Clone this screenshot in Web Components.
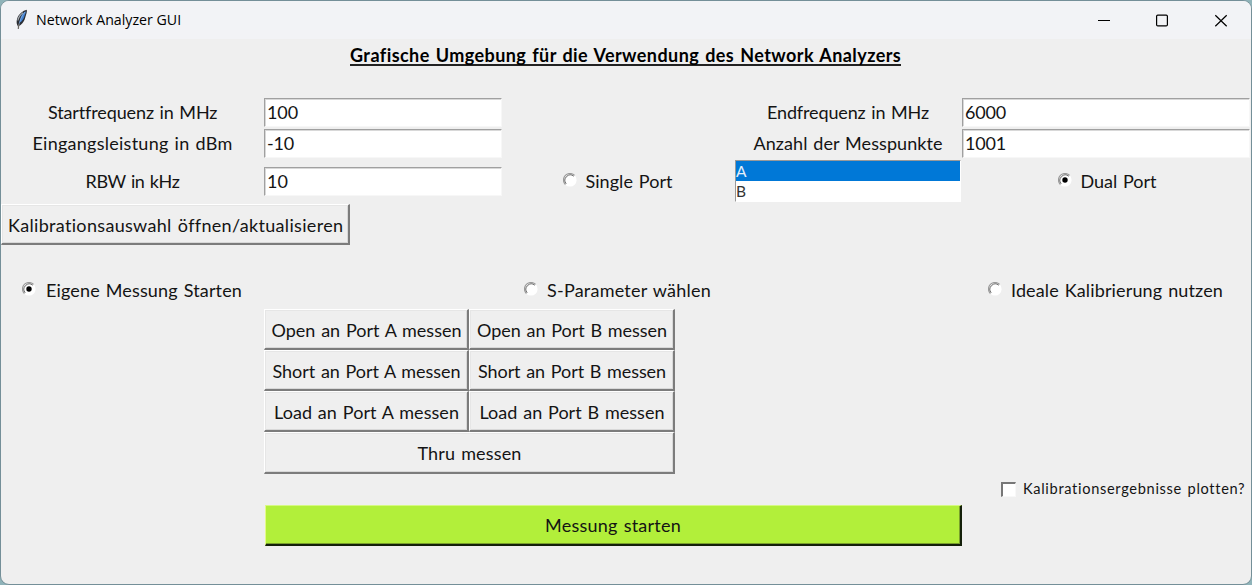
<!DOCTYPE html>
<html lang="de">
<head>
<meta charset="utf-8">
<title>Network Analyzer GUI</title>
<style>
html,body{margin:0;height:100%;overflow:hidden;background:#8fb3b9}
body{font-family:Lato,"Noto Sans",sans-serif;font-size:18px;color:#141414}
</style>
</head>
<body>
<analyzer-app></analyzer-app>
<script>
function define(name, markup, ready) {
  const template = document.createElement('template');
  template.innerHTML = markup;
  customElements.define(name, class extends HTMLElement {
    connectedCallback() {
      if (this.shadowRoot) return;
      this.attachShadow({mode: 'open'}).appendChild(template.content.cloneNode(true));
      if (ready) ready.call(this, this.shadowRoot);
    }
  });
}

/* Text set to a fixed measure by adjusting the tracking */
define('tk-text', `<style>:host{display:inline-block;white-space:nowrap;line-height:22px;flex:none;word-spacing:1.200px}span{display:inline-block}</style><span><slot></slot></span>`, function (root) {
  const target = Number(this.getAttribute('measure'));
  if (!target) return;
  const span = root.querySelector('span');
  const count = this.textContent.length;
  span.style.letterSpacing = (target - span.getBoundingClientRect().width) / count + 'px';
  this.style.width = target + 'px';
});

define('tk-feather', `<style>:host{display:block;width:13px;height:21px}svg{display:block}</style>
<svg width="13" height="21" viewBox="0 0 13 21">
<path d="M11.800 .8C8 1.500 3.800 5 2.200 9.500C1.200 12.500 1.500 15.600 3 17.500L5.600 16C8.300 13.700 9.800 11 10.400 8C11.200 5.400 12.200 3 11.800 .8Z" fill="#2b2e34"/>
<path d="M10.800 2.200C8.300 3.200 6.500 6 5.500 9L4.200 14C7.200 12.700 8.600 9.800 9.300 7.600C9.900 5.300 10.900 4.200 10.800 2.200Z" fill="#3f80d2"/>
<path d="M8 3.800C5.400 5.600 3.500 8.300 2.900 11.500" fill="none" stroke="#a3a9ae" stroke-width="1.200"/>
<path d="M10 3C6.500 7 4.700 12 3.300 18" fill="none" stroke="#9dbfe6" stroke-width=".6"/>
<path d="M3.800 15L3.300 20" stroke="#6a6763" stroke-width="1.200" fill="none"/></svg>`);

define('title-bar', `<style>
:host{display:flex;height:38px;background:#f2f3f6;align-items:center;color:#000}
tk-feather{margin:-1px 8px 0 14px}
tk-text{font:14.200px "Open Sans","Noto Sans",sans-serif;line-height:20px;word-spacing:0}
svg{margin-left:auto;margin-right:23px;display:block}
</style><tk-feather></tk-feather><tk-text measure="147.500"><slot></slot></tk-text>
<svg width="130" height="14" viewBox="0 0 130 14" fill="none" stroke="#000">
<path d="M0 7.500H12" stroke-width="1"/><rect x="58.600" y="2.100" width="10.800" height="10.800" rx="1.200" stroke-width="1.200"/><path d="M117.300 2.200L128.700 13.200M128.700 2.200L117.300 13.200" stroke-width="1.200"/></svg>`);

define('tk-entry', `<style>
:host{display:block;box-sizing:border-box;height:29px;background:#fff;border:1px solid #f7f7f7;border-top:1px solid #a0a0a0;border-left:1px solid #a0a0a0;box-shadow:inset 1px 1px #d8d8d8;padding:2px 0 0 2px}
</style><slot></slot>`);

define('tk-button', `<style>
:host{display:flex;box-sizing:border-box;align-items:center;justify-content:center;padding:2px 0 0 1px;background:#efefef;border:solid;border-width:1px 2px 2px 1px;border-color:#fff #7c7c7c #7c7c7c #fff;box-shadow:inset 1px 1px #e6e6e6,inset -1px -1px #d8d8d8}
:host([primary]){background:#b2ef3a;border-color:#d6f982 #14200a #14200a #e4fb8a;box-shadow:inset -1px -1px #789f2a;padding:0}
</style><slot></slot>`);

define('tk-radio', `<style>
:host{display:flex;align-items:center}
svg{display:block;flex:none;margin:-3px 9px 0 0}
.dot{display:none}:host([checked]) .dot{display:block}
</style><svg width="14" height="14" viewBox="0 0 14 14"><circle cx="7" cy="7" r="6.600" fill="#fff"/>
<path d="M2.400 11.600A6.500 6.500 0 0 1 11.600 2.400" stroke="#999" stroke-width="1.200" fill="none"/>
<path d="M3.200 10.800A5.400 5.400 0 0 1 10.800 3.200" stroke="#666" stroke-width="1" fill="none"/>
<circle class="dot" cx="7" cy="7" r="2.700" fill="#000"/></svg><slot></slot>`);

define('tk-check', `<style>
:host{display:flex;align-items:center;justify-content:flex-end}
i{box-sizing:border-box;width:15px;height:15px;background:#fff;border:solid;border-width:2px 1px 1px 2px;border-color:#777 #f8f8f8 #f8f8f8 #777;margin-right:7px}
</style><i></i><slot></slot>`);

define('tk-list', `<style>
:host{display:block;box-sizing:border-box;width:226px;height:42px;background:#fff;border:1px solid #fff;border-top:1px solid #999;border-left:1px solid #999;font-size:15.500px;color:#333}
div{height:20px;line-height:18px;display:flex}
.on{background:#0078d7;color:#e4effa}
::slotted(*){line-height:20px!important}
</style><div class="on"><slot name="a"></slot></div><div><slot name="b"></slot></div>`);

define('analyzer-app', `<style>
:host{display:block;box-sizing:border-box;width:1252px;height:585px;border:1px solid #748f98;border-radius:9px;overflow:hidden;background:#efefef}
h1{margin:0;height:34px;display:flex;align-items:center;justify-content:center;font-size:18px;color:#000}
h1 tk-text{border-bottom:2px solid #222;line-height:19px;height:18px;margin-left:-1px}
.form{margin-top:24px;display:grid;grid-template-columns:263px 239px 231px 228px 289px;grid-template-rows:31px 31px 45px;align-items:center;justify-items:center}
.form>tk-text{margin-top:-2px}
tk-entry{justify-self:stretch;margin-right:1px}
.form>tk-radio{margin:-1px 0 0 1px}
.form>.single{margin-left:-2px}
tk-list{align-self:start;margin:1px 0 0 0}
.open{width:349px;height:41px}
.modes{display:flex;margin-top:25px;height:40px;align-items:center}
.modes tk-radio:nth-child(1){margin-left:21px}
.modes tk-radio:nth-child(2){margin-left:282px}
.modes tk-radio:nth-child(3){margin-left:277px}
.modes tk-radio:nth-child(1) tk-text{margin-left:1px}
.std{margin:-1px 0 0 263px;width:411px;display:grid;grid-template-columns:205px 206px;grid-template-rows:41px 41px 41px 42px}
.wide{grid-column:1/3;padding-top:1px}
.plot{height:30px;padding-right:6px;font-size:14.600px}
.start{margin:1px 0 0 264px;width:697px;height:41px}
</style>
<title-bar>Network Analyzer GUI</title-bar>
<h1><tk-text measure="551">Grafische Umgebung für die Verwendung des Network Analyzers</tk-text></h1>
<div class="form">
<tk-text measure="169">Startfrequenz in MHz</tk-text><tk-entry><tk-text measure="31">100</tk-text></tk-entry><span></span><tk-text measure="162">Endfrequenz in MHz</tk-text><tk-entry><tk-text measure="41">6000</tk-text></tk-entry>
<tk-text measure="200">Eingangsleistung in dBm</tk-text><tk-entry><tk-text measure="27">-10</tk-text></tk-entry><span></span><tk-text measure="189">Anzahl der Messpunkte</tk-text><tk-entry><tk-text measure="41">1001</tk-text></tk-entry>
<tk-text measure="94">RBW in kHz</tk-text><tk-entry><tk-text measure="21">10</tk-text></tk-entry><tk-radio class="single"><tk-text measure="87">Single Port</tk-text></tk-radio><tk-list><tk-text slot="a">A</tk-text><tk-text slot="b">B</tk-text></tk-list><tk-radio checked><tk-text measure="76">Dual Port</tk-text></tk-radio>
</div>
<tk-button class="open"><tk-text measure="335">Kalibrationsauswahl öffnen/aktualisieren</tk-text></tk-button>
<div class="modes"><tk-radio checked><tk-text measure="196">Eigene Messung Starten</tk-text></tk-radio><tk-radio><tk-text measure="164">S-Parameter wählen</tk-text></tk-radio><tk-radio><tk-text measure="212">Ideale Kalibrierung nutzen</tk-text></tk-radio></div>
<div class="std">
<tk-button><tk-text measure="190">Open an Port A messen</tk-text></tk-button><tk-button><tk-text measure="190">Open an Port B messen</tk-text></tk-button>
<tk-button><tk-text measure="188">Short an Port A messen</tk-text></tk-button><tk-button><tk-text measure="188">Short an Port B messen</tk-text></tk-button>
<tk-button><tk-text measure="185">Load an Port A messen</tk-text></tk-button><tk-button><tk-text measure="185">Load an Port B messen</tk-text></tk-button>
<tk-button class="wide"><tk-text measure="104">Thru messen</tk-text></tk-button>
</div>
<tk-check class="plot"><tk-text measure="222">Kalibrationsergebnisse plotten?</tk-text></tk-check>
<tk-button class="start" primary><tk-text measure="136">Messung starten</tk-text></tk-button>`);
</script>
</body>
</html>
